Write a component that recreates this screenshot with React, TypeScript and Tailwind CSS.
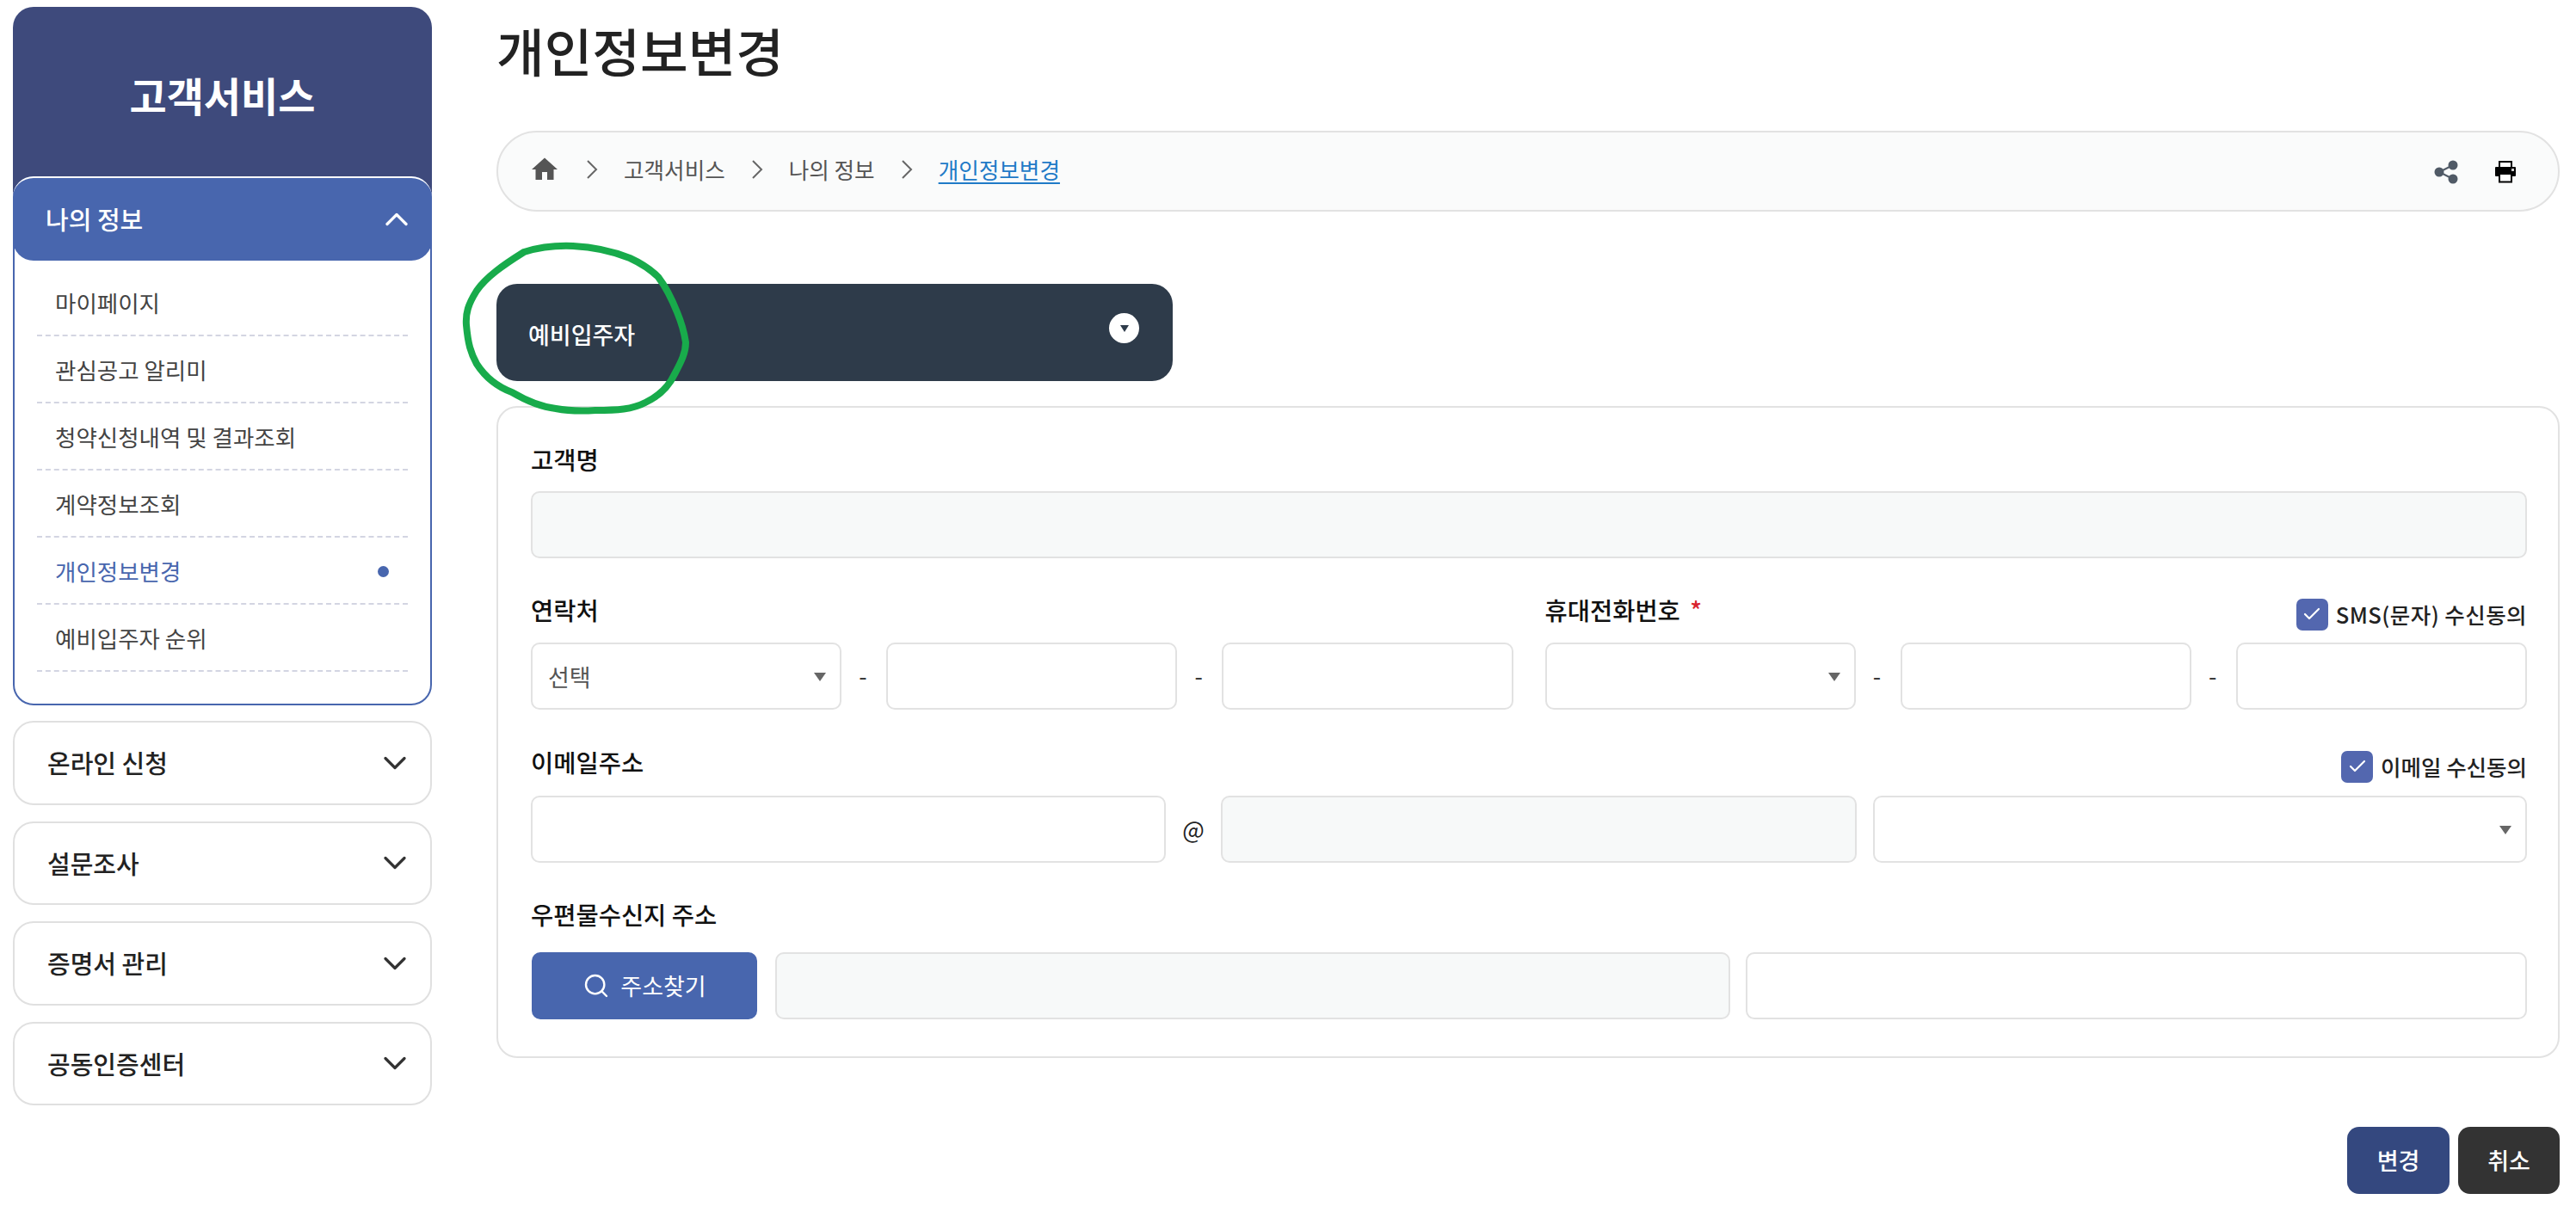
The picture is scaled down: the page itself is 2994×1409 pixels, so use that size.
import { ChevronDown, ChevronUp, Search, Check } from 'lucide-react'
import { MdHome } from 'react-icons/md'

const subMenu = ['마이페이지', '관심공고 알리미', '청약신청내역 및 결과조회', '계약정보조회', '개인정보변경', '예비입주자 순위']
const closedMenu = ['온라인 신청', '설문조사', '증명서 관리', '공동인증센터']

function Sidebar() {
  return (
    <aside className="w-[487px] ml-[15px] mt-[8px] shrink-0">
      <div className="h-[232px] rounded-t-[24px] bg-[#3e4a7c] pt-[76px] text-center text-[47px] leading-[52px] font-bold text-white">
        고객서비스
      </div>
      {/* open group */}
      <div className="-mt-[35px] relative rounded-[24px] border-2 border-[#4866ae] bg-white h-[615px]">
        <div className="-mx-[2px] -mt-[2px] h-[98px] rounded-[24px] bg-[#4866ae] border-t-2 border-white flex items-center justify-between pl-[38px] pr-[19px] text-[29px] font-medium text-white">
          <span>나의 정보</span>
          <ChevronUp size={44} strokeWidth={1.8} />
        </div>
        <ul className="pt-[10px] px-[26px]">
          {subMenu.map((label, i) => (
            <li
              key={label}
              className={`h-[78px] pt-[2px] border-b-2 border-dashed border-[#d3d5e2] flex items-center justify-between pl-[21px] pr-[22px] text-[26.5px] ${i === 4 ? 'text-[#4866ae]' : 'text-[#444444]'}`}
            >
              <span>{label}</span>
              {i === 4 && <span className="w-[13px] h-[13px] rounded-full bg-[#4866ae]" />}
            </li>
          ))}
        </ul>
      </div>
      <div className="mt-[18px] flex flex-col gap-[19px]">
        {closedMenu.map((label) => (
          <div
            key={label}
            className="h-[97.5px] rounded-[24px] border-2 border-[#e0e0e0] flex items-center justify-between pl-[38px] pr-[19px] text-[29px] font-medium text-[#222222]"
          >
            <span>{label}</span>
            <ChevronDown size={44} strokeWidth={1.8} className="text-[#333333]" />
          </div>
        ))}
      </div>
    </aside>
  )
}

function Crumb() {
  return (
    <svg width="14" height="24" viewBox="0 0 14 24" fill="none" stroke="#666666" strokeWidth="2" className="mx-[30px]">
      <path d="M2 2 L12 12 L2 22" />
    </svg>
  )
}

function ShareIcon() {
  return (
    <svg width="28" height="28" viewBox="0 0 28 28" fill="#505a66" stroke="#505a66">
      <path d="M22 6 L6 14 L22 22" fill="none" strokeWidth="2" />
      <circle cx="22" cy="6" r="5.5" stroke="none" />
      <circle cx="6" cy="14" r="5.5" stroke="none" />
      <circle cx="22" cy="22" r="5.5" stroke="none" />
    </svg>
  )
}

function PrintIcon() {
  return (
    <svg width="26" height="26" viewBox="0 0 26 26">
      <rect x="6" y="1" width="14" height="9" fill="#ffffff" stroke="#000000" strokeWidth="2" />
      <rect x="1" y="7" width="24" height="11" rx="1" fill="#000000" />
      <rect x="6" y="15" width="14" height="9.5" fill="#ffffff" stroke="#000000" strokeWidth="2" />
      <rect x="20" y="9" width="3" height="3" fill="#cccccc" />
    </svg>
  )
}

function Breadcrumb() {
  return (
    <div className="h-[94px] rounded-[47px] border-2 border-[#e2e2e2] bg-[#fafbfb] flex items-center justify-between pl-[39px] pr-[48px] text-[25.6px] text-[#555555]">
      <div className="flex items-center pb-[4px]">
        <MdHome size={36} className="text-[#555555] -ml-[3px]" />
        <Crumb />
        <span>고객서비스</span>
        <Crumb />
        <span>나의 정보</span>
        <Crumb />
        <span className="text-[#1f7ac7] underline underline-offset-4">개인정보변경</span>
      </div>
      <div className="flex items-center gap-[42px] pt-[2px]">
        <ShareIcon />
        <PrintIcon />
      </div>
    </div>
  )
}

function Label({ children }: { children: React.ReactNode }) {
  return <span className="text-[28.5px] font-medium text-[#111111]">{children}</span>
}

function Field({ disabled, className }: { disabled?: boolean; className?: string }) {
  return (
    <input
      disabled={disabled}
      className={`h-[78px] min-w-0 rounded-[10px] border-2 border-[#e2e2e2] ${disabled ? 'bg-[#f7f9f9]' : 'bg-white'} ${className ?? ''}`}
    />
  )
}

function SelectBox({ text, className }: { text?: string; className?: string }) {
  return (
    <div className={`relative h-[78px] rounded-[10px] border-2 border-[#e2e2e2] bg-white flex items-center pl-[18px] pt-[2px] text-[27px] text-[#555555] ${className ?? ''}`}>
      {text}
      <svg width="16" height="12" viewBox="0 0 16 12" className="absolute right-[15px] top-[32px]">
        <path d="M1 1 H15 L8 11 Z" fill="#666666" />
      </svg>
    </div>
  )
}

function Dash() {
  return <span className="w-[52px] shrink-0 pr-[2px] text-center text-[27px] text-[#333333]">-</span>
}

function Agree({ children, wide }: { children: React.ReactNode; wide?: boolean }) {
  return (
    <span className={`flex items-center gap-[9px] mt-[10px] text-[25.5px] font-medium text-[#222222] ${wide ? 'tracking-[0.45px]' : ''}`}>
      <span className="w-[37px] h-[37px] rounded-[7px] bg-[#5367af] flex items-center justify-center">
        <Check size={24} color="#ffffff" strokeWidth={2.2} />
      </span>
      {children}
    </span>
  )
}

function PhoneRow({ text }: { text?: string }) {
  return (
    <div className="flex items-center">
      <SelectBox text={text} className="w-[361px] shrink-0" />
      <Dash />
      <Field className="flex-1" />
      <Dash />
      <Field className="flex-1" />
    </div>
  )
}

export default function App() {
  return (
    <div className="w-[2994px] h-[1409px] overflow-hidden bg-white flex font-['Noto_Sans_CJK_KR','Noto_Sans',sans-serif]">
      <Sidebar />

      <main className="ml-[75px] w-[2398px] shrink-0">
        <h1 className="h-[118px] leading-[116px] text-[60.5px] font-medium text-[#222222] mb-[34px]">개인정보변경</h1>
        <Breadcrumb />

        {/* tab with the hand drawn marker over it */}
        <div className="relative mt-[84px] w-[786px] h-[113px]">
          <div className="h-full rounded-[24px] bg-[#2e3b4a] flex items-center justify-between pl-[37px] pr-[39px] text-[27px] font-medium text-white">
            <span className="pt-[6px]">예비입주자</span>
            <span className="w-[35px] h-[35px] -mt-[10px] rounded-full bg-white flex items-center justify-center">
              <svg width="12" height="10" viewBox="0 0 12 10">
                <path d="M1 1 H11 L6 9 Z" fill="#2e3b4a" />
              </svg>
            </span>
          </div>
          <svg width="270" height="205" viewBox="0 0 270 205" fill="none" className="absolute -left-[40px] -top-[50px]">
            <path
              d="M129 6 C105 5 88 8 72 13 C48 28 28 42 17 58 C7 74 4 84 5 98 C7 120 10 130 17 143 C28 160 42 170 58 176 C75 186 92 193 109 195 C125 198 140 198 155 197 C180 197 198 196 213 188 C230 180 240 170 247 155 C255 140 260 130 260 118 C258 105 255 95 250 83 C244 68 238 55 228 42 C218 32 208 26 195 20 C175 12 150 7 129 6 Z"
              stroke="#18ab4b"
              strokeWidth="8"
            />
          </svg>
        </div>

        {/* form */}
        <div className="mt-[29px] h-[758px] rounded-[24px] border-2 border-[#e2e2e2] pt-[40px] pl-[38px] pr-[36px]">
          <div className="h-[40px] flex items-center mb-[17px]">
            <Label>고객명</Label>
          </div>
          <Field disabled className="w-full block" />

          <div className="mt-[40px] grid grid-cols-2 gap-x-[37px]">
            <div>
              <div className="h-[40px] flex items-center mb-[18px]">
                <Label>연락처</Label>
              </div>
              <PhoneRow text="선택" />
            </div>
            <div>
              <div className="h-[40px] flex items-center justify-between mb-[18px]">
                <Label>
                  휴대전화번호 <span className="ml-[5px] text-[#d9232e]">*</span>
                </Label>
                <Agree wide>SMS(문자) 수신동의</Agree>
              </div>
              <PhoneRow />
            </div>
          </div>

          <div className="mt-[41px] h-[40px] flex items-center justify-between mb-[19px]">
            <Label>이메일주소</Label>
            <Agree>이메일 수신동의</Agree>
          </div>
          <div className="flex items-center">
            <Field className="w-[738px] shrink-0" />
            <span className="w-[64px] text-center text-[27px] text-[#222222]">@</span>
            <Field disabled className="w-[739px] shrink-0" />
            <SelectBox className="ml-[19px] flex-1" />
          </div>

          <div className="mt-[40px] h-[40px] flex items-center mb-[24px]">
            <Label>우편물수신지 주소</Label>
          </div>
          <div className="flex items-center">
            <button className="w-[262px] h-[78px] ml-[1px] shrink-0 rounded-[10px] bg-[#4866ae] flex items-center justify-center gap-[12px] text-[27px] text-white">
              <Search size={32} strokeWidth={1.8} />
              주소찾기
            </button>
            <Field disabled className="ml-[21px] w-[1110px] shrink-0" />
            <Field className="ml-[18px] flex-1" />
          </div>
        </div>

        <div className="mt-[80px] flex justify-end gap-[10px] text-[27px] font-medium text-white">
          <button className="w-[119px] h-[78px] rounded-[14px] bg-[#34487f]">변경</button>
          <button className="w-[118px] h-[78px] rounded-[14px] bg-[#333333]">취소</button>
        </div>
      </main>
    </div>
  )
}
